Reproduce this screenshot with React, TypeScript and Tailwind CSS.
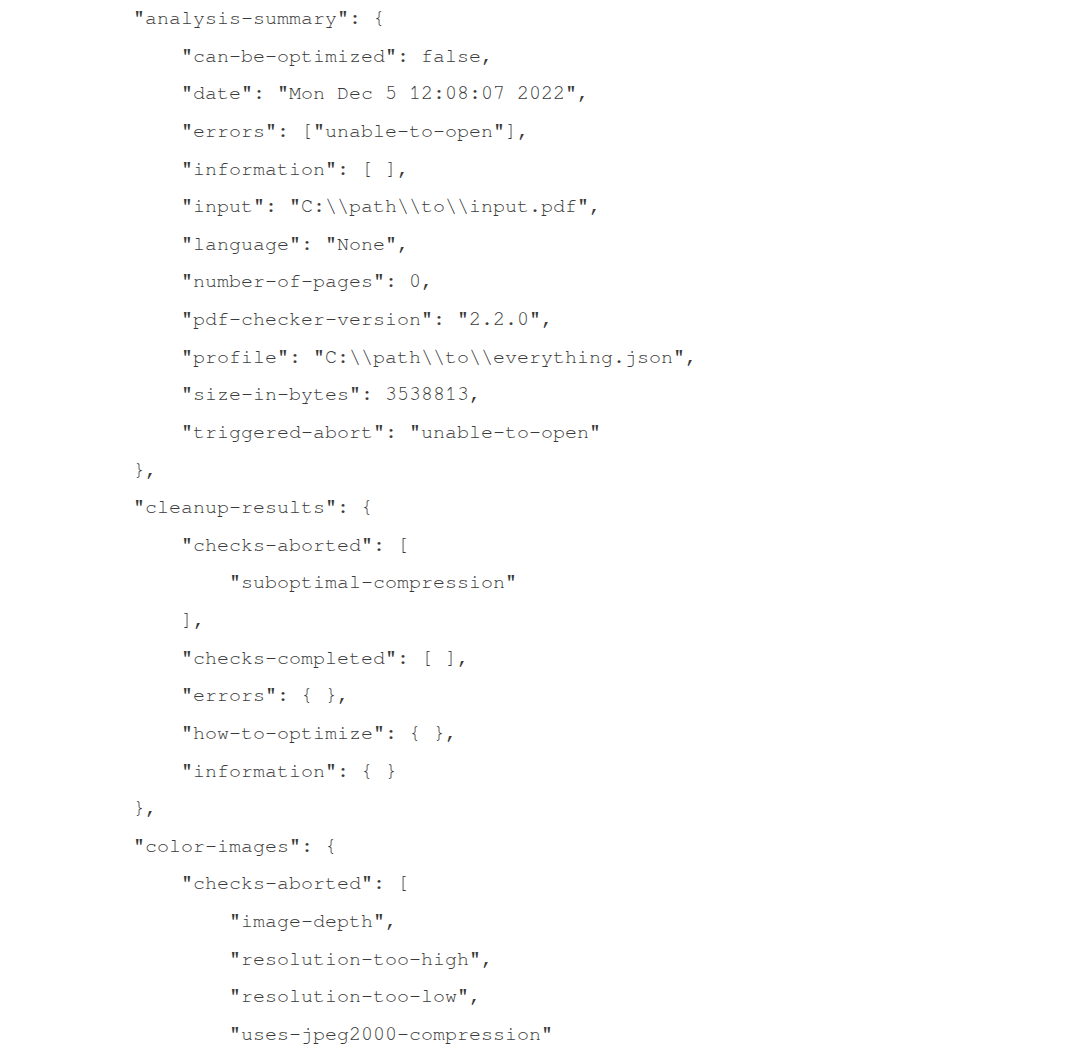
import React from "react";

const lines: string[] = [
  `"analysis-summary": {`,
  `    "can-be-optimized": false,`,
  `    "date": "Mon Dec 5 12:08:07 2022",`,
  `    "errors": ["unable-to-open"],`,
  `    "information": [ ],`,
  `    "input": "C:\\\\path\\\\to\\\\input.pdf",`,
  `    "language": "None",`,
  `    "number-of-pages": 0,`,
  `    "pdf-checker-version": "2.2.0",`,
  `    "profile": "C:\\\\path\\\\to\\\\everything.json",`,
  `    "size-in-bytes": 3538813,`,
  `    "triggered-abort": "unable-to-open"`,
  `},`,
  `"cleanup-results": {`,
  `    "checks-aborted": [`,
  `        "suboptimal-compression"`,
  `    ],`,
  `    "checks-completed": [ ],`,
  `    "errors": { },`,
  `    "how-to-optimize": { },`,
  `    "information": { }`,
  `},`,
  `"color-images": {`,
  `    "checks-aborted": [`,
  `        "image-depth",`,
  `        "resolution-too-high",`,
  `        "resolution-too-low",`,
  `        "uses-jpeg2000-compression"`,
];

export default function App() {
  return (
    <div className="w-[1085px] h-[1050px] overflow-hidden bg-white">
      <pre className="pl-[133px] pt-0 m-0 font-['Nimbus_Mono_PS','FreeMono','Liberation_Mono',monospace] text-[20px] leading-[37.63px] text-[#3a3a3a]">
        {lines.map((l, i) => (
          <div key={i}>{l}</div>
        ))}
      </pre>
    </div>
  );
}
